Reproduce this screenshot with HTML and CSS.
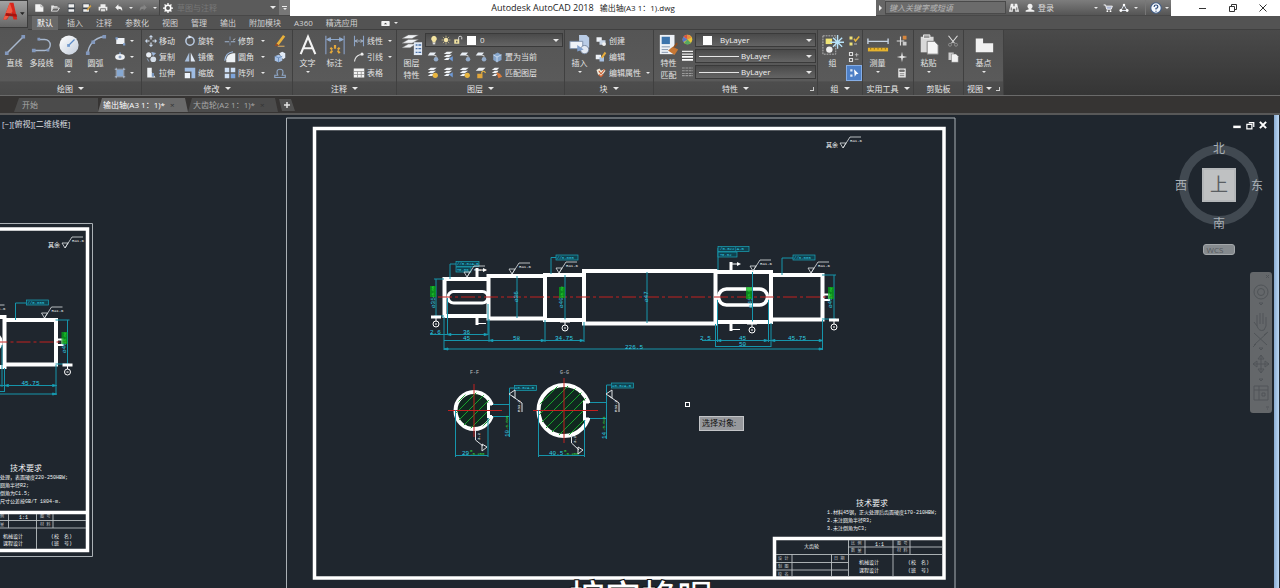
FILE: index.html
```html
<!DOCTYPE html>
<html lang="zh-CN">
<head>
<meta charset="utf-8">
<title>Autodesk AutoCAD 2018 输出轴(A3 1：1).dwg</title>
<link rel="stylesheet" href="styles.css">
</head>
<body>
<svg class="defs" aria-hidden="true">
  <defs>
    <linearGradient id="ball" x1="0" y1="0" x2="1" y2="1"><stop offset="0" stop-color="#fff"/><stop offset="1" stop-color="#c3cddb"/></linearGradient>
    <symbol id="i-new" viewBox="0 0 16 16"><path d="M2 2h9l4 4v8H2z" fill="#f4f4f4"/><path d="M11 2v4h4" fill="none" stroke="#888"/></symbol>
    <symbol id="i-open" viewBox="0 0 16 16"><path d="M2 13V4h4l1 1h5v2H5z" fill="#e8e8e8"/><path d="M5 8h10l-3 5H2z" fill="none" stroke="#eee" stroke-width="1.3"/></symbol>
    <symbol id="i-save" viewBox="0 0 16 16"><path d="M3 1h11v14H3z" fill="#3d444d"/><path d="M4 2h9v5H4zM4 10h9v4H4z" fill="#f0f0f0"/></symbol>
    <symbol id="i-saveas" viewBox="0 0 16 16"><path d="M1 1h11v14H1z" fill="#3d444d"/><path d="M2 2h9v5H2zM2 10h9v4H2z" fill="#f0f0f0"/><path d="M7 11l6-8 2 2-6 7z" fill="#d9a23c"/></symbol>
    <symbol id="i-print" viewBox="0 0 16 16"><path d="M4 2h8v4H4zM1 6h14v6H1z" fill="#eee"/><path d="M4 9h8v5H4z" fill="#ddd" stroke="#555"/></symbol>
    <symbol id="i-undo" viewBox="0 0 16 16"><path d="M2 7l5-5v3c5 0 7 3 6 8-1-3-3-4-6-4v3z" fill="#f2f2f2"/></symbol>
    <symbol id="i-redo" viewBox="0 0 16 16"><path d="M14 7L9 2v3c-5 0-7 3-6 8 1-3 3-4 6-4v3z" fill="#858585"/></symbol>
    <symbol id="i-gear" viewBox="0 0 16 16"><circle cx="8" cy="8" r="4.5" fill="none" stroke="#fff" stroke-width="2.6"/><path d="M8 0v3M8 13v3M0 8h3M13 8h3M2.500 2.500l2 2M11.500 11.500l2 2M13.500 2.500l-2 2M4.500 11.500l-2 2" stroke="#fff" stroke-width="2"/></symbol>
    <symbol id="i-bino" viewBox="0 0 16 16"><path d="M3 1h4v4h2V1h4l3 13h-6V9H6v5H0z" fill="#f0f0f0"/><path d="M3.500 7v5M12.500 7v5" stroke="#555" stroke-width="1.500"/></symbol>
    <symbol id="i-user" viewBox="0 0 16 16"><circle cx="8" cy="5" r="4" fill="#f0f0f0"/><path d="M6 8h4v2l5 2v2H1v-2l5-2z" fill="#f0f0f0"/></symbol>
    <symbol id="i-cart" viewBox="0 0 16 16"><path d="M1 3h3l2 7h7l2-5H5" fill="#aeb8d6" stroke="#f3f3f3" stroke-width="1.500"/><circle cx="7" cy="13" r="1.500" fill="#fff"/><circle cx="12" cy="13" r="1.500" fill="#fff"/></symbol>
    <symbol id="i-share" viewBox="0 0 16 16"><path d="M8 3L3 12h10z" fill="none" stroke="#dfe5f2" stroke-width="1.500"/><circle cx="8" cy="3" r="2" fill="#fff"/><circle cx="3" cy="12" r="2.300" fill="#fff"/><circle cx="13" cy="12" r="2.300" fill="#fff"/></symbol>
    <symbol id="i-rect" viewBox="0 0 16 16"><path d="M3 4h11v8H3z" fill="#eef1f5"/><path d="M2 3h3v3H2zM12 11h3v3h-3z" fill="#7f9fcb"/></symbol>
    <symbol id="i-ell" viewBox="0 0 16 16"><ellipse cx="8" cy="8" rx="6.500" ry="4" fill="#eef1f5"/><path d="M8 6v4M6 8h4" stroke="#4b6c9c"/><path d="M7 2h2v2H7z" fill="#8fb0db"/></symbol>
    <symbol id="i-hatch" viewBox="0 0 16 16"><path d="M4 4h8v8H4z" fill="#86a8d2"/><path d="M3 1v14M13 1v14M1 3h14M1 13h14" stroke="#b8cbe6"/></symbol>
    <symbol id="i-move" viewBox="0 0 16 16"><path d="M8 0l3 3H5zM8 16l3-3H5zM0 8l3-3v6zM16 8l-3-3v6z" fill="#c9d9ee"/><path d="M8 3v10M3 8h10" stroke="#dfe9f6" stroke-width="1.500"/><path d="M6 6h4v4H6z" fill="#555"/></symbol>
    <symbol id="i-rotate" viewBox="0 0 16 16"><circle cx="8" cy="8" r="5.500" fill="none" stroke="#b8c9e0" stroke-width="2"/><path d="M6 0l4 2.500L6 5z" fill="#e6edf7"/></symbol>
    <symbol id="i-trim" viewBox="0 0 16 16"><path d="M1 9h6M9 9h6" stroke="#9fb4d1" stroke-width="1.500"/><path d="M8 2v5M8 10v4" stroke="#71839d" stroke-width="1.500"/><path d="M12 7l3-2" stroke="#ddd"/></symbol>
    <symbol id="i-copy" viewBox="0 0 16 16"><circle cx="5" cy="5" r="3.500" fill="#e8edf4"/><circle cx="11" cy="11" r="3.800" fill="#d5dee9"/><path d="M9 2l5 1-3 3zM3 10l2 4" fill="#9fb8dc" stroke="#9fb8dc"/></symbol>
    <symbol id="i-mirror" viewBox="0 0 16 16"><path d="M7 2v12H1z" fill="#a8bedb"/><path d="M9 2v12h6z" fill="#dfe8f4"/></symbol>
    <symbol id="i-fillet" viewBox="0 0 16 16"><path d="M3 15V11Q4 4 12 3h3v12z" fill="#eef2f6"/><path d="M1 13Q2 2 12 1" fill="none" stroke="#9db9df" stroke-width="1.500"/></symbol>
    <symbol id="i-stretch" viewBox="0 0 16 16"><path d="M3 1h6v6l5 7H3z" fill="#eef2f6"/><path d="M9 8h3v5H9z" fill="#7896bd"/></symbol>
    <symbol id="i-scale" viewBox="0 0 16 16"><path d="M1 1h14v14H10V6H1z" fill="#9ebce3"/><path d="M1 8h7v7H1z" fill="#eef4fb"/></symbol>
    <symbol id="i-array" viewBox="0 0 16 16"><path d="M1 1h6v6H1zM9 1h6v6H9zM1 9h6v6H1z" fill="#cfe0f5"/><path d="M9 9h6v6H9z" fill="#7da4db"/></symbol>
    <symbol id="i-pencil" viewBox="0 0 16 16"><path d="M3 12L12 0l3 2-9 12z" fill="#e9b13b"/><path d="M5 15h9" stroke="#d6a85f" stroke-width="1.500"/><path d="M1 15l2-4 4 3z" fill="#9c4c24"/></symbol>
    <symbol id="i-explode" viewBox="0 0 16 16"><path d="M1 7l5-2 5 2v6l-5 2-5-2z" fill="#a8c2e6"/><path d="M7 3l4-2 4 2v6l-3 2" fill="#e2ebf7"/><path d="M1 7l5 2 5-2M6 9v6" stroke="#5e82b2" fill="none"/></symbol>
    <symbol id="i-offset" viewBox="0 0 16 16"><path d="M1 14h14v-3h-4q3-8-3-8t-3 8H1z" fill="none" stroke="#8da5c5" stroke-width="1.500"/></symbol>
    <symbol id="i-dim" viewBox="0 0 16 16"><path d="M2 1v14M14 1v14" stroke="#8aa4c8" stroke-width="1.500"/><path d="M3 8h10M3 8l3-2M3 8l3 2M13 8l-3-2M13 8l-3 2" stroke="#b9cce6"/></symbol>
    <symbol id="i-leader" viewBox="0 0 16 16"><path d="M2 14Q3 7 9 5h5" fill="none" stroke="#e5e5e5" stroke-width="1.500"/><circle cx="12" cy="4" r="2" fill="#eee"/></symbol>
    <symbol id="i-table" viewBox="0 0 16 16"><path d="M1 2h14v12H1z" fill="#f3f3f3"/><path d="M1 6h14M1 10h14M6 6v8M11 6v8" stroke="#8a8a8a"/></symbol>
    <symbol id="i-layer" viewBox="0 0 16 16"><path d="M4 2h8l-3 4H1z" fill="#e8eef5"/><path d="M9 6h3v3" fill="none" stroke="#ddd"/><circle cx="12" cy="11" r="3" fill="#93abc9"/></symbol>
    <symbol id="i-layer2" viewBox="0 0 16 16"><path d="M5 1h8l-4 3H1zM5 5h7l-4 3H1zM5 9h5l-3 3H1z" fill="#eef2f6"/><path d="M8 10l5-3v7z" fill="#6f9ad6"/></symbol>
    <symbol id="i-layery" viewBox="0 0 16 16"><path d="M5 1h8l-4 3H1zM5 5h7l-4 3H1zM5 9h5l-3 3H1z" fill="#eef2f6"/><circle cx="11" cy="11" r="3.500" fill="#e9b640"/></symbol>
    <symbol id="i-layerr" viewBox="0 0 16 16"><path d="M5 1h6l-3 3H1zM5 5h5l-2 3H1zM5 9h4l-3 3H1z" fill="#eef2f6"/><path d="M7 7l5 2 3 4-5 2z" fill="#db7b3c"/></symbol>
    <symbol id="i-unlock" viewBox="0 0 16 16"><path d="M5 1h9l-4 4H1z" fill="#eef2f6"/><path d="M3 9h7v6H3z" fill="#e2a63a"/><path d="M9 9V7q3-3 5 1" fill="none" stroke="#e9b640" stroke-width="1.500"/></symbol>
    <symbol id="i-cube" viewBox="0 0 16 16"><path d="M3 5l6-3 5 3v7l-6 3-5-3z" fill="#86a6cc"/><path d="M3 5l5 3 6-3M8 8v7" fill="none" stroke="#dce8f6"/></symbol>
    <symbol id="i-bulb" viewBox="0 0 16 16"><path d="M8 1a5 5 0 0 1 2.500 9v2h-5v-2A5 5 0 0 1 8 1z" fill="#f3e3a0"/><path d="M6 12h4v3H6z" fill="#ddd"/></symbol>
    <symbol id="i-sun" viewBox="0 0 16 16"><circle cx="8" cy="8" r="3.500" fill="#f5e5a8"/><path d="M8 1v3M8 12v3M1 8h3M12 8h3M3 3l2 2M11 11l2 2M13 3l-2 2M5 11l-2 2" stroke="#e8d794"/></symbol>
    <symbol id="i-lock" viewBox="0 0 16 16"><path d="M2 7h8v7H2z" fill="#f0e2a2"/><path d="M9 8V4q0-2 2.500-2T14 4v3" fill="none" stroke="#ddd" stroke-width="1.500"/><path d="M5 9h2v3H5z" fill="#555"/></symbol>
    <symbol id="i-blk" viewBox="0 0 16 16"><path d="M2 3h7v6H2z" fill="#edf1f6"/><path d="M6 7h8v6H6z" fill="#c9d6e8"/><circle cx="12" cy="12" r="2.500" fill="#f2f2f2"/></symbol>
    <symbol id="i-blke" viewBox="0 0 16 16"><path d="M1 5h7v6H1z" fill="#edf1f6"/><path d="M6 8h6v6H6z" fill="#a9c1e2"/><path d="M8 8l5-7 2 2-5 7z" fill="#e7ac3c"/></symbol>
    <symbol id="i-attr" viewBox="0 0 16 16"><path d="M2 4l4-2 2 3 4-2 2 2-3 4-3 4-4-3z" fill="#f1eada"/><path d="M5 5l3 4 5-6M5 10l3 3 3-3" fill="none" stroke="#c95b2e" stroke-width="1.500"/></symbol>
    <symbol id="i-wheel" viewBox="0 0 16 16"><circle cx="8" cy="8" r="7" fill="#e6c53c"/><path d="M8 8L2 4A7 7 0 0 1 8 1z" fill="#d4524a"/><path d="M8 8V1a7 7 0 0 1 6 4z" fill="#e98a3c"/><path d="M8 8l-6 4A7 7 0 0 1 2 4z" fill="#5776c9"/><path d="M8 8l5 5A7 7 0 0 1 3 13z" fill="#58a862"/></symbol>
    <symbol id="i-lines" viewBox="0 0 16 16"><path d="M0 2h16M0 6h16" stroke="#eee" stroke-width="1.500"/><path d="M0 10h16M0 14.500h16" stroke="#fff" stroke-width="2.500"/></symbol>
    <symbol id="i-ltype" viewBox="0 0 16 16"><path d="M0 3h16M0 7h16M0 11h16M0 14h16" stroke="#9a9a9a" stroke-width="1.500" stroke-dasharray="4 1"/></symbol>
    <symbol id="i-grpe" viewBox="0 0 16 16"><path d="M2 2h4v4H2zM2 10h4v4H2z" fill="#eee27a"/><path d="M8 5l2 3 5-6" fill="none" stroke="#e7b63d" stroke-width="2"/><path d="M8 12h4" stroke="#ddd"/></symbol>
    <symbol id="i-grp2" viewBox="0 0 16 16"><path d="M2 2h4v4H2zM2 10h4v4H2z" fill="none" stroke="#ddd" stroke-width="1.500"/><path d="M9 5h5M9 11h5M11.500 2.500v5" stroke="#ccc"/></symbol>
    <symbol id="i-grp3" viewBox="0 0 16 16"><path d="M3 3h3v3H3zM3 10h3v3H3z" fill="#dbe8f8"/><path d="M8 3l6 6-3 .5L9 13z" fill="#fff"/></symbol>
    <symbol id="i-idpt" viewBox="0 0 16 16"><path d="M6 2v12M1 8h10" stroke="#ddd" stroke-width="1.500"/><path d="M9 1h5v5H9z" fill="#d7863d"/><path d="M9 9h5v5H9z" fill="#ccc"/></symbol>
    <symbol id="i-pt" viewBox="0 0 16 16"><path d="M8 1l1.200 5.800L15 8l-5.800 1.200L8 15 6.800 9.200 1 8l5.800-1.200z" fill="#e5e5e5"/></symbol>
    <symbol id="i-calc" viewBox="0 0 16 16"><path d="M3 2h10v12H3z" fill="#e8e8e8"/><path d="M5 4h6v2H5zM5 9h6M5 11.500h6" stroke="#666" fill="#777"/></symbol>
    <symbol id="i-cut" viewBox="0 0 16 16"><path d="M2 1l8 10M14 1L6 11" stroke="#ddd" stroke-width="1.500"/><circle cx="4" cy="13" r="2" fill="none" stroke="#999"/><circle cx="12" cy="13" r="2" fill="none" stroke="#999"/></symbol>
    <symbol id="i-cp" viewBox="0 0 16 16"><path d="M2 2h7v10H2z" fill="#ccc"/><path d="M6 4h6l3 3v8H6z" fill="#f2f2f2" stroke="#666" stroke-width=".6"/></symbol>
    <symbol id="b-line" viewBox="0 0 24 24"><path d="M3 21L21 3" stroke="#a9b9cf" stroke-width="1.500"/><path d="M1 19h4v4H1zM19 1h4v4h-4z" fill="#8298bd"/></symbol>
    <symbol id="b-pline" viewBox="0 0 24 24"><path d="M3 18h12a6 6 0 0 0 0-12H8" fill="none" stroke="#a9b9cf" stroke-width="1.500"/><path d="M1 16h4v4H1zM7 4h3v3H7zM17 16h3v3h-3z" fill="#8298bd"/></symbol>
    <symbol id="b-circle" viewBox="0 0 24 24"><circle cx="12" cy="12" r="10.500" fill="url(#ball)"/><path d="M12 12l6-6" stroke="#5c8bc7" stroke-width="1.300"/><path d="M10 11h3v3h-3z" fill="#6f98cc"/></symbol>
    <symbol id="b-arc" viewBox="0 0 24 24"><path d="M3 21C4 12 10 4 21 3" fill="none" stroke="#a9b9cf" stroke-width="1.500"/><path d="M1 19h4v4H1zM19 1h4v4h-4zM7 7h4v4H7z" fill="#8298bd"/></symbol>
    <symbol id="b-A" viewBox="0 0 24 24"><path d="M4 22L12 3l8 19M6.500 15.500h11" fill="none" stroke="#f4f4f4" stroke-width="2.300"/></symbol>
    <symbol id="b-dim" viewBox="0 0 24 24"><path d="M2 2v20M22 2v20" stroke="#8093b2" stroke-width="1.500"/><path d="M3 6h18M3 6l4-2v4zM21 6l-4-2v4z" stroke="#93aed2" fill="#93aed2"/><path d="M12 12v4M7 21l2-3M17 21l-2-3M7 15l2 2M17 15l-2 2" stroke="#e3a83a" stroke-width="2.400"/></symbol>
    <symbol id="b-lay" viewBox="0 0 24 24"><path d="M8 1h11l-7 4H1zM8 6h11l-7 4H1zM8 11h8l-6 4H1z" fill="#f1f3f6" stroke="#777" stroke-width=".5"/><path d="M14 9h9v14h-9z" fill="#dfe8f4"/><path d="M16 12h2M19 12h3M16 16h2M19 16h3M16 20h2M19 20h3" stroke="#4a71a8" stroke-width="1.500"/></symbol>
    <symbol id="b-ins" viewBox="0 0 24 24"><path d="M11 1h8l3 3v11H11z" fill="#b9cce6"/><path d="M1 8h14v8H1z" fill="#eef2f8" stroke="#7a8ca8"/><circle cx="17" cy="17" r="4.500" fill="#e2e9f3" stroke="#75869f"/><path d="M9 12l7 5-7 2z" fill="#7f9ecb"/></symbol>
    <symbol id="b-match" viewBox="0 0 24 24"><path d="M2 1h16v21H2z" fill="#edf1f6"/><path d="M4 3h9v8H4z" fill="#3c74ac"/><path d="M4 14h9M4 17h7M4 20h7" stroke="#7c8fa9"/><path d="M11 18l5-4 6 3-4 6z" fill="#c77734"/><path d="M17 15l4-5" stroke="#8d4e20" stroke-width="2"/></symbol>
    <symbol id="b-grp" viewBox="0 0 24 24"><path d="M1 2h14v20H1z" fill="none" stroke="#bbb" stroke-dasharray="2 1"/><path d="M4 5h7v6H4z" fill="#efe477"/><circle cx="8" cy="17" r="3.500" fill="#f0f0f0"/><path d="M17 1v15M9 9h15M12 4l10 10M22 4L12 14" stroke="#b7e2f8" stroke-width="1.500"/></symbol>
    <symbol id="b-meas" viewBox="0 0 24 24"><path d="M1 5v6M23 5v6M1 8h22" stroke="#c5d2e2" stroke-width="1.500"/><path d="M1 15h22v4H1z" fill="#e6b32e"/><path d="M4 15v2M8 15v2M12 15v2M16 15v2M20 15v2" stroke="#8a6a14"/></symbol>
    <symbol id="b-paste" viewBox="0 0 24 24"><path d="M3 3h14v17H3z" fill="#d9d9d9"/><path d="M6 1h7v4H6z" fill="#999" stroke="#eee"/><path d="M10 8h8l4 4v10H10z" fill="#f5f5f5" stroke="#777"/></symbol>
    <symbol id="b-base" viewBox="0 0 24 24"><path d="M3 5h8v5h11v10H3z" fill="#f1f1f1"/></symbol>
  </defs>
</svg>

<header class="head">
  <button class="app" aria-label="应用程序菜单">
    <svg viewBox="0 0 28 28"><path d="M3 20L10 2h4l4 18h-4l-2-8-5 8z" fill="#d8261c"/><path d="M10 2l3 9-7 9H3z" fill="#f05a44"/><path d="M6 13l11 1 1 3-13-1z" fill="#a5140e"/><path d="M21 12h5l-2.500 3z" fill="#222"/></svg>
  </button>
  <div class="titlebar">
    <div class="qat">
      <button aria-label="新建"><svg><use href="#i-new"/></svg></button>
      <button aria-label="打开"><svg><use href="#i-open"/></svg></button>
      <button aria-label="保存"><svg><use href="#i-save"/></svg></button>
      <button aria-label="另存为"><svg><use href="#i-saveas"/></svg></button>
      <button aria-label="打印"><svg><use href="#i-print"/></svg></button>
      <button aria-label="放弃"><svg><use href="#i-undo"/></svg></button>
      <button class="thin" aria-label="放弃列表"><i class="caret"></i></button>
      <button aria-label="重做"><svg><use href="#i-redo"/></svg></button>
      <button class="thin" aria-label="重做列表"><i class="caret"></i></button>
      <label class="space"><svg><use href="#i-gear"/></svg><select aria-label="工作空间"><option>草图与注释</option></select><i class="caret"></i></label>
      <button class="more" aria-label="自定义"><i class="bar"></i><i class="caret"></i></button>
    </div>
    <h1 class="title"><span>Autodesk AutoCAD 2018</span><span>输出轴(A3 1：1).dwg</span></h1>
    <div class="info">
      <button class="arrow" aria-label="展开搜索"><i class="caret right"></i></button>
      <input type="search" aria-label="搜索" placeholder="键入关键字或短语">
      <button aria-label="查找"><svg><use href="#i-bino"/></svg></button>
      <button class="login"><svg><use href="#i-user"/></svg>登录</button>
      <button class="thin" aria-label="登录菜单"><i class="caret"></i></button>
      <button aria-label="购物车"><svg><use href="#i-cart"/></svg></button>
      <button aria-label="共享"><svg><use href="#i-share"/></svg></button>
      <button class="thin" aria-label="共享菜单"><i class="caret"></i></button>
      <button class="help" aria-label="帮助"><svg viewBox="0 0 16 16"><circle cx="8" cy="8" r="7" fill="#f3f7fc" stroke="#3f5c86" stroke-width="1.500"/><path d="M5.500 6.500q0-2.500 2.500-2.500t2.500 2.200Q10.500 8 8 8.500V10M8 11.500v1.500" fill="none" stroke="#2e4d7c" stroke-width="1.600"/></svg></button>
      <button class="thin" aria-label="帮助菜单"><i class="caret"></i></button>
    </div>
    <div class="win">
      <button aria-label="最小化"><svg viewBox="0 0 12 12"><path d="M3 6.500h7"/></svg></button>
      <button aria-label="还原"><svg viewBox="0 0 12 12"><path d="M2.500 4.500h5v5h-5zM4.500 4V2.500h5v5H8"/></svg></button>
      <button aria-label="关闭"><svg viewBox="0 0 12 12"><path d="M2.500 2.500l7 7M9.500 2.500l-7 7"/></svg></button>
    </div>
  </div>
  <nav class="menu">
    <button class="on">默认</button><button>插入</button><button>注释</button><button>参数化</button><button>视图</button><button>管理</button><button>输出</button><button>附加模块</button><button>A360</button><button>精选应用</button>
    <button class="mini" aria-label="最小化功能区"><svg viewBox="0 0 10 6"><rect width="10" height="6" rx="1" fill="#f3f3f3"/><path d="M3 4h4L5 2z" fill="#444"/></svg><i class="caret"></i></button>
  </nav>
</header>

<main class="ribbon">
  <section class="panel p-draw">
    <div class="tools">
      <button class="big"><svg><use href="#b-line"/></svg>直线</button>
      <button class="big"><svg><use href="#b-pline"/></svg>多段线</button>
      <button class="big"><svg><use href="#b-circle"/></svg>圆<i class="caret"></i></button>
      <button class="big"><svg><use href="#b-arc"/></svg>圆弧<i class="caret"></i></button>
      <div class="col inset">
        <button class="sm" aria-label="矩形"><svg><use href="#i-rect"/></svg><i class="caret"></i></button>
        <button class="sm" aria-label="椭圆"><svg><use href="#i-ell"/></svg><i class="caret"></i></button>
        <button class="sm" aria-label="图案填充"><svg><use href="#i-hatch"/></svg><i class="caret"></i></button>
      </div>
    </div>
    <h2>绘图<i class="caret"></i></h2>
  </section>
  <section class="panel p-mod">
    <div class="tools grid4">
      <button class="sm"><svg><use href="#i-move"/></svg>移动</button>
      <button class="sm"><svg><use href="#i-rotate"/></svg>旋转</button>
      <button class="sm"><svg><use href="#i-trim"/></svg>修剪<i class="caret"></i></button>
      <button class="sm" aria-label="删除"><svg><use href="#i-pencil"/></svg></button>
      <button class="sm"><svg><use href="#i-copy"/></svg>复制</button>
      <button class="sm"><svg><use href="#i-mirror"/></svg>镜像</button>
      <button class="sm"><svg><use href="#i-fillet"/></svg>圆角<i class="caret"></i></button>
      <button class="sm" aria-label="分解"><svg><use href="#i-explode"/></svg></button>
      <button class="sm"><svg><use href="#i-stretch"/></svg>拉伸</button>
      <button class="sm"><svg><use href="#i-scale"/></svg>缩放</button>
      <button class="sm"><svg><use href="#i-array"/></svg>阵列<i class="caret"></i></button>
      <button class="sm" aria-label="偏移"><svg><use href="#i-offset"/></svg></button>
    </div>
    <h2>修改<i class="caret"></i></h2>
  </section>
  <section class="panel p-note">
    <div class="tools">
      <button class="big"><svg><use href="#b-A"/></svg>文字<i class="caret"></i></button>
      <button class="big"><svg><use href="#b-dim"/></svg>标注</button>
      <div class="col inset">
        <button class="sm"><svg><use href="#i-dim"/></svg>线性<i class="caret"></i></button>
        <button class="sm"><svg><use href="#i-leader"/></svg>引线<i class="caret"></i></button>
        <button class="sm"><svg><use href="#i-table"/></svg>表格</button>
      </div>
    </div>
    <h2>注释<i class="caret"></i></h2>
  </section>
  <section class="panel p-layer">
    <div class="tools">
      <button class="big"><svg><use href="#b-lay"/></svg>图层<br>特性</button>
      <div class="col wide">
        <label class="drop"><svg><use href="#i-bulb"/></svg><svg><use href="#i-sun"/></svg><svg><use href="#i-lock"/></svg><b class="chip"></b><select aria-label="图层"><option>0</option></select><i class="caret"></i></label>
        <div class="row">
          <button class="sm" aria-label="关"><svg><use href="#i-layer"/></svg></button><button class="sm" aria-label="隔离"><svg><use href="#i-layer2"/></svg></button><button class="sm" aria-label="冻结"><svg><use href="#i-layer"/></svg></button><button class="sm" aria-label="锁定"><svg><use href="#i-layer"/></svg></button><button class="sm"><svg><use href="#i-cube"/></svg>置为当前</button>
        </div>
        <div class="row">
          <button class="sm" aria-label="打开所有图层"><svg><use href="#i-layery"/></svg></button><button class="sm" aria-label="取消隔离"><svg><use href="#i-layer2"/></svg></button><button class="sm" aria-label="解冻"><svg><use href="#i-layery"/></svg></button><button class="sm" aria-label="解锁"><svg><use href="#i-unlock"/></svg></button><button class="sm"><svg><use href="#i-layerr"/></svg>匹配图层</button>
        </div>
      </div>
    </div>
    <h2>图层<i class="caret"></i></h2>
  </section>
  <section class="panel p-block">
    <div class="tools">
      <button class="big"><svg><use href="#b-ins"/></svg>插入<i class="caret"></i></button>
      <div class="col">
        <button class="sm"><svg><use href="#i-blk"/></svg>创建</button>
        <button class="sm"><svg><use href="#i-blke"/></svg>编辑</button>
        <button class="sm"><svg><use href="#i-attr"/></svg>编辑属性<i class="caret"></i></button>
      </div>
    </div>
    <h2>块<i class="caret"></i></h2>
  </section>
  <section class="panel p-prop">
    <div class="tools">
      <button class="big"><svg><use href="#b-match"/></svg>特性<br>匹配</button>
      <div class="col wide">
        <label class="prop"><svg><use href="#i-wheel"/></svg><span class="drop"><b class="chip"></b><select aria-label="颜色"><option>ByLayer</option></select><i class="caret"></i></span></label>
        <label class="prop"><svg><use href="#i-lines"/></svg><span class="drop"><b class="rule"></b><select aria-label="线宽"><option>ByLayer</option></select><i class="caret"></i></span></label>
        <label class="prop"><svg><use href="#i-ltype"/></svg><span class="drop"><b class="rule"></b><select aria-label="线型"><option>ByLayer</option></select><i class="caret"></i></span></label>
      </div>
    </div>
    <h2>特性<i class="caret"></i><i class="launch"></i></h2>
  </section>
  <section class="panel p-group">
    <div class="tools">
      <button class="big"><svg><use href="#b-grp"/></svg>组</button>
      <div class="col">
        <button class="sm" aria-label="解除编组"><svg><use href="#i-grpe"/></svg></button>
        <button class="sm" aria-label="组编辑"><svg><use href="#i-grp2"/></svg></button>
        <button class="sm active" aria-label="启用组选择"><svg><use href="#i-grp3"/></svg></button>
      </div>
    </div>
    <h2>组<i class="caret"></i></h2>
  </section>
  <section class="panel p-util">
    <div class="tools">
      <button class="big"><svg><use href="#b-meas"/></svg>测量<i class="caret"></i></button>
      <div class="col inset">
        <button class="sm" aria-label="快速选择"><svg><use href="#i-idpt"/></svg></button>
        <button class="sm" aria-label="点坐标"><svg><use href="#i-pt"/></svg></button>
        <button class="sm" aria-label="计算器"><svg><use href="#i-calc"/></svg></button>
      </div>
    </div>
    <h2>实用工具<i class="caret"></i></h2>
  </section>
  <section class="panel p-clip">
    <div class="tools">
      <button class="big"><svg><use href="#b-paste"/></svg>粘贴<i class="caret"></i></button>
      <div class="col inset">
        <button class="sm" aria-label="剪切"><svg><use href="#i-cut"/></svg></button>
        <button class="sm" aria-label="复制剪裁"><svg><use href="#i-cp"/></svg></button>
      </div>
    </div>
    <h2>剪贴板</h2>
  </section>
  <section class="panel p-view">
    <div class="tools">
      <button class="big"><svg><use href="#b-base"/></svg>基点<i class="caret"></i></button>
    </div>
    <h2>视图<i class="caret"></i><i class="launch"></i></h2>
  </section>
</main>

<nav class="files">
  <button class="file start">开始</button>
  <button class="file on">输出轴(A3 1：1)*<i>×</i></button>
  <button class="file">大齿轮(A2 1：1)*<i>×</i></button>
  <button class="plus" aria-label="新图形"><svg viewBox="0 0 18 12"><path d="M1 0h12l4 12H4z" fill="#515151"/><path d="M6 6h6M9 3v6" stroke="#e3e3e3" stroke-width="1.500"/></svg></button>
</nav>

<div class="canvas">
  <svg class="drawing" role="img" aria-label="输出轴零件图">
    <defs>
      <g id="rough"><path d="M0 0L-3-5H3ZL7-11H18" fill="none" stroke="#dfe3e6" stroke-width=".8"/><text x="7" y="-6" class="t4 w">Ra1.6</text></g>
      <g id="datum"><path d="M-5 0H5" stroke="#fff" stroke-width="3"/><path d="M0 0V4" stroke="#fff"/><circle cy="7" r="3" fill="none" stroke="#fff"/><path d="M-1 7H1" stroke="#fff"/></g>
      <g id="cutmark"><path d="M0-4V5" stroke="#fff" stroke-width="3"/><path d="M0-2H8" stroke="#fff"/><path d="M10-2L6-4V0z" fill="#fff"/></g>
      <g id="tri"><path d="M0 0L6-4V4ZM3 2L13 9V18" fill="none" stroke="#dfe3e6"/><text transform="translate(11 18) rotate(-90)" class="t4 w">Ra3.2</text></g>
      <clipPath id="c1"><circle cx="474" cy="410.500" r="18"/></clipPath>
      <clipPath id="c2"><circle cx="564" cy="410.500" r="25"/></clipPath>
      <g id="shaft">
        <g class="thick">
          <path d="M444.500 279H488.500V316H444.500ZM488.500 276H545V318.500H488.500ZM545 275H584V320H545ZM584 271H715.500V323.500H584ZM715.500 272H771V322H715.500ZM771 275H822.500V319.500H771Z"/>
          <rect x="448" y="291.500" width="40" height="11.500" rx="5.700" stroke-width="3"/>
          <rect x="718.500" y="289" width="49" height="16" rx="8" stroke-width="3.500"/>
          <path d="M824 294.500H829V300H824" stroke-width="2"/>
        </g>
        <path d="M438 297H834" class="red" stroke-dasharray="14 3 3 3"/>
        <g class="cyan">
          <path d="M444 317V350M447.500 298V335M488 304V335M489 319V342M545 320V342M584 322V342M715.500 324V347M717.500 300V342M768.500 300V342M771 323V347M822.500 320V350"/>
          <path d="M430 334.500H488M444 340.500H584M702 340.500H823M715 346.500H771M444 349H823"/>
          <path d="M436 279V316M434 279H444M434 316H444M517 276V318M565 275V320M647 272V323M752.500 272V322M834 275V319M822 275H836M822 319H836"/>
          <path d="M450 279V264H456M551 274V257.500H556M718 270V248M782 275V258H793"/>
          <g class="fcf"><rect x="456" y="261.500" width="23" height="5"/><rect x="456" y="267" width="15" height="5"/><rect x="556" y="255" width="22" height="5"/><rect x="718" y="246.500" width="31" height="5"/><rect x="718" y="252" width="19" height="5"/><rect x="793" y="255" width="22" height="5"/></g>
          <path d="M447 334.500l4-1v2zM488 334.500l-4-1v2zM489 340.500l4-1v2zM545 340.500l-4-1v2zM584 340.500l-4-1v2zM717 340.500l4-1v2zM768 340.500l-4-1v2zM444 349l4-1v2zM823 349l-4-1v2zM823 340.500l-4-1v2zM771 340.500l4-1v2z" fill="#1fb9cf"/>
        </g>
        <g class="t4 c">
          <text x="457" y="265">//0.02A-B</text><text x="457" y="271">⌖0.06</text><text x="557" y="259">//0.005</text><text x="720" y="250">/0.022|A-B</text><text x="720" y="256">⌖0.02</text><text x="794" y="259">//0.005</text>
        </g>
        <g class="t6 c">
          <text x="430" y="334">2.6</text><text x="463" y="334">36</text><text x="463" y="340">45</text><text x="513" y="340">58</text><text x="555" y="340">34.75</text><text x="625" y="349">226.5</text><text x="700" y="340">2.5</text><text x="739" y="340">45</text><text x="739" y="346">50</text><text x="788" y="340">45.75</text>
          <text transform="translate(435 308) rotate(-90)">ø35</text><text transform="translate(518 302) rotate(-90)">ø36</text><text transform="translate(563 308) rotate(-90)">ø40</text><text transform="translate(648 302) rotate(-90)">ø47</text><text transform="translate(752 308) rotate(-90)">ø45</text><text transform="translate(832 308) rotate(-90)">ø40</text>
        </g>
        <g fill="#05a718" opacity=".75"><path d="M430 286h6v11h-6zM559 287h6v11h-6zM746 287h6v12h-6zM828 287h6v12h-6z"/></g>
        <g class="t4 g"><text transform="translate(434 298) rotate(-90)">+0.05</text><text transform="translate(563 298) rotate(-90)">+0.02</text><text transform="translate(750 299) rotate(-90)">+0.02</text><text transform="translate(832 299) rotate(-90)">+0.02</text></g>
        <use href="#rough" x="467" y="277"/><use href="#rough" x="512" y="274"/><use href="#rough" x="559" y="273"/><use href="#rough" x="753" y="271"/><use href="#rough" x="811" y="273"/>
        <use href="#datum" x="436" y="317"/><use href="#datum" x="565" y="321"/><use href="#datum" x="752" y="323"/><use href="#datum" x="834" y="320"/>
        <use href="#cutmark" x="477" y="272"/><use href="#cutmark" x="731" y="266"/>
        <path d="M477 317V325M731 323V331" stroke="#fff" stroke-width="3"/><path d="M477 323.500H486M731 329.500H740" stroke="#fff"/>
      </g>
    </defs>
    <g transform="translate(0 -115)">
      <path d="M286.500 600V118H955V600" fill="none" stroke="#aab0b5"/>
      <rect x="314.500" y="128.500" width="629.500" height="449.500" fill="none" stroke="#fff" stroke-width="3.500"/>
      <text x="826" y="147" class="t6 w">其余</text><use href="#rough" x="843" y="148"/>
      <use href="#shaft"/>

      <g>
        <circle cx="474" cy="410.500" r="18.500" fill="#10281f" stroke="#fff" stroke-width="4"/>
        <g clip-path="url(#c1)" class="green"><path d="M446 414l30-30M446 423l38-38M448 431l44-44M456 433l42-42M465 434l34-34M475 434l26-26"/></g>
        <path d="M489 405h8v11h-8z" fill="#1f262e"/><path d="M492 404H488.500V416.500H492" fill="none" stroke="#fff" stroke-width="3"/>
        <path d="M448 410.500H502M474 384V437" class="red"/>
        <circle cx="564" cy="410.500" r="25.500" fill="#10281f" stroke="#fff" stroke-width="4"/>
        <g clip-path="url(#c2)" class="green"><path d="M530 414l40-40M530 424l50-50M534 430l50-50M541 433l50-50M548 436l46-46M554 440l40-40M562 442l30-30"/></g>
        <path d="M585 403h9v15h-9z" fill="#1f262e"/><path d="M589 402H584.500V419H589" fill="none" stroke="#fff" stroke-width="3"/>
        <path d="M533 410.500H598M564 378V443" class="red"/>
      </g>
      <g class="cyan">
        <path d="M493 404.500H510M493 416.500H510M509.500 437V388H514M455.500 410V457M488 418V457M455 455.500H488"/>
        <path d="M590 402.500H606M590 418.500H606M606.500 439V385H611M538.500 410V457M584.500 420V457M538 455.500H585"/>
        <g class="fcf"><rect x="514.500" y="385.500" width="22" height="5"/><rect x="611.500" y="383" width="22" height="5"/></g>
      </g>
      <g class="t4 c"><text x="515" y="389">=0.02A-B</text><text x="612" y="387">=0.02A-B</text></g>
      <g class="t6 c"><text x="462" y="455">29</text><text x="549" y="455">40.5</text><text transform="translate(509 437) rotate(-90)">10</text><text transform="translate(606 439) rotate(-90)">14</text></g>
      <g class="t4 g"><text x="470" y="452">0</text><text x="470" y="455">-0.200</text><text x="564" y="452">0</text><text x="564" y="455">-0.200</text><text transform="translate(508 430) rotate(-90)">-0.036</text><text transform="translate(605 431) rotate(-90)">-0.043</text></g>
      <use href="#tri" x="509" y="394"/><use href="#tri" x="606" y="394"/>
      <g fill="none" stroke="#dfe3e6"><path d="M475.500 431V440L483 446M482 444V451L487 447ZM571.500 435V443L579 450M578 447V454L583 450Z"/></g>
      <g class="t4 w"><text transform="translate(480 440) rotate(-90)">3.2</text><text transform="translate(576 443) rotate(-90)">3.2</text></g>
      <g class="t5 w dim"><text x="470" y="374">F-F</text><text x="560" y="374">G-G</text></g>
      <rect x="685.500" y="402.500" width="4" height="4" fill="none" stroke="#fff"/>

      <text x="856" y="506" class="t8 w">技术要求</text>
      <g class="t5 w"><text x="827" y="514">1.材料45钢，正火处理后齿面硬度170-210HBW;</text><text x="827" y="522">2.未注圆角半径R3;</text><text x="827" y="530">3.未注倒角为C3;</text></g>
      <path d="M774.500 578V538.500H943" fill="none" stroke="#fff" stroke-width="3.500"/>
      <g fill="none" stroke="#b9bec2" stroke-width=".9"><path d="M848.500 540V577M893 540V577M865 540V554M910 540V554M848 547H943M776 554.500H943M776 562.500H848M776 570H848M792 554V577M831.500 554V577"/></g>
      <g class="t5 w"><text x="804" y="548">大齿轮</text><text x="875" y="546">1:1</text><text x="859" y="564">机械设计</text><text x="859" y="572">课程设计</text><text x="908" y="564">(校　名)</text><text x="908" y="572">(班　号)</text></g>
      <g class="t4 w dim"><text x="778" y="560">设 计</text><text x="778" y="568">制 图</text><text x="778" y="576">校 名</text><text x="834" y="560">日 期</text><text x="851" y="545">比 例</text><text x="851" y="552">数 量</text><text x="897" y="545">图 号</text><text x="897" y="552">材 料</text></g>

      <use href="#shaft" x="-766.500" y="45"/>
      <path d="M0 223.500H92.500V556.500H0" fill="none" stroke="#aab0b5"/>
      <path d="M0 229H87.500V550.500H0M0 512.500H87" fill="none" stroke="#fff" stroke-width="3.500"/>
      <text x="48" y="247" class="t6 w">其余</text><use href="#rough" x="65" y="248"/>
      <text x="10" y="471" class="t8 w">技术要求</text>
      <g class="t5 w"><text x="0" y="479">处理，表面硬度220-250HBW;</text><text x="0" y="487">圆角半径R2;</text><text x="0" y="495">倒角为C1.5;</text><text x="0" y="503">尺寸公差按GB/T 1804-m.</text><text x="19" y="519">1:1</text><text x="3" y="538">机械设计</text><text x="3" y="545">课程设计</text><text x="51" y="538">(校　名)</text><text x="51" y="545">(班　号)</text></g>
      <path d="M0 520.500H86M0 528H86M8.500 514V528M36.500 514V549M53 514V528" fill="none" stroke="#b9bec2" stroke-width=".9"/>
      <g class="t4 w dim"><text x="0" y="518">例</text><text x="0" y="526">量</text><text x="40" y="518">图 号</text><text x="40" y="526">材 料</text></g>
    </g>
  </svg>

  <p class="viewlabel">[−][俯视][二维线框]</p>
  <div class="docwin">
    <button aria-label="最小化图形"><svg viewBox="0 0 8 8"><path d="M1 5.500h6" stroke-width="2"/></svg></button>
    <button aria-label="还原图形"><svg viewBox="0 0 8 8"><path d="M1.500 3.500h4v3.500h-4zM3 2h4v3.500"/></svg></button>
    <button aria-label="关闭图形"><svg viewBox="0 0 8 8"><path d="M1.500 1.500l5 5M6.500 1.500l-5 5" stroke-width="1.600"/></svg></button>
  </div>
  <svg class="cube" viewBox="0 0 92 96" role="img" aria-label="视图方位">
    <circle cx="46" cy="49" r="35.500" fill="none" stroke="#414951" stroke-width="9"/>
    <rect x="29" y="32" width="34" height="34" fill="#b4b7b9"/><rect x="31" y="34" width="30" height="30" fill="#bfc1c2"/>
    <text x="46" y="55" class="top">上</text>
    <g class="dir"><text x="46" y="17">北</text><text x="46" y="92">南</text><text x="8" y="54">西</text><text x="84" y="54">东</text></g>
  </svg>
  <button class="wcs">WCS</button>
  <div class="navbar">
    <svg viewBox="0 0 22 141" fill="none" stroke="#505458"><path d="M16 3l3 3M19 3l-3 3"/><circle cx="11" cy="20" r="7"/><circle cx="11" cy="20" r="3.500"/><path d="M9 31h4l-2 2zM9 76h4l-2 2zM9 107h4l-2 2z"/><path d="M7 54V43M10 52V41M13 52V41M16 54V45M7 54q2 6 7 4l2-4M4 50l3 4"/><path d="M4 61l13 12M17 61L4 73M14 63l4-3M3 75l3-3"/><path d="M11 83v18M3 92h16M11 83l-3 4h6zM11 101l-3-4h6zM3 92l4-3v6zM19 92l-4-3v6z"/><path d="M4 114h14v14H4zM4 118h14M9 114v14M12 121h3v3h-3z"/><path d="M16 135h3M17 137h1"/></svg>
  </div>
  <div class="tip">选择对象:</div>
  <div class="edge"></div>
  <p class="caption">按空格呢</p>
</div>
</body>
</html>
```
FILE: styles.css
```css
* { box-sizing: border-box; }
html, body { height: 100%; }
body {
  margin: 0;
  display: flex;
  flex-direction: column;
  overflow: hidden;
  background: #1f262e;
  color: #e4e4e4;
  font: 8px/12px "Open Sans", "Noto Sans CJK SC", sans-serif;
}
button, input, select { font: inherit; color: inherit; margin: 0; padding: 0; border: 0; background: none; }
button { display: inline-flex; align-items: center; justify-content: center; white-space: nowrap; }
select { appearance: none; outline: 0; flex: 1; min-width: 0; }
h1, h2, p { margin: 0; font-weight: normal; font-size: inherit; }
svg { display: block; flex: none; }
.defs { position: absolute; width: 0; height: 0; }

.caret { flex: none; width: 0; height: 0; border: 2px solid transparent; border-top-color: #e8e8e8; border-bottom: 0; }
.caret.right { border: 3px solid transparent; border-left-color: #eee; border-right: 0; }

/* title bar */
.head { display: grid; grid-template-columns: 28px 1fr; grid-template-rows: 16px 14px; background: #535353; flex: none; }
.app { grid-row: 1 / 3; align-self: start; height: 28px; background: linear-gradient(#a3a3a3, #666); border: 1px solid #3c3c3c; border-left: 0; }
.app svg { width: 27px; height: 26px; }
.titlebar { display: flex; background: #fff; min-width: 0; }
.qat, .info { display: flex; align-items: center; background: linear-gradient(#7d7d7d, #555); border-bottom: 1px solid #484848; }
.qat { padding-left: 3px; }
.qat button, .info button { width: 16px; height: 15px; }
.qat svg, .info svg { width: 10px; height: 10px; }
.qat .thin, .info .thin { width: 8px; }
.space { display: flex; align-items: center; width: 120px; height: 15px; padding: 0 3px; gap: 4px; background: #5b5b5b; border-left: 1px solid #444; color: #777; }
.space .caret { border-width: 3px 3px 0; }
.qat .more { width: 11px; flex-direction: column; gap: 1px; background: #777; }
.bar { width: 5px; height: 1px; background: #eee; }
.title { flex: 1; display: flex; justify-content: center; gap: 6px; line-height: 16px; color: #222; font-size: 9px; }
.title span + span { font-size: 8px; }
.info .arrow { width: 9px; background: #666; }
.info input { width: 121px; height: 13px; padding: 0 3px; background: #6b6b6b; border: 1px solid #4a4a4a; font-style: italic; }
.info input::placeholder { color: #b5b5b5; opacity: 1; }
.info .login { width: 70px; justify-content: flex-start; gap: 3px; padding-left: 3px; color: #ddd; }
.info .help { width: 18px; border-left: 1px solid #777; margin-left: 5px; padding-left: 3px; }
.info .help svg { width: 12px; height: 12px; }
.win { display: flex; width: 109px; justify-content: space-between; padding: 0 11px 0 25px; }
.win svg { width: 12px; height: 12px; fill: none; stroke: #333; stroke-width: 1; }

/* ribbon tabs */
.menu { display: flex; gap: 5px; padding-left: 4px; border-bottom: 1px solid #3f3f3f; color: #d2d2d2; }
.menu button { padding: 0 4px; height: 14px; }
.menu .on { padding: 0 5px; background: #696969; color: #fff; }
.menu .mini { gap: 4px; margin-left: 10px; }
.menu .mini svg { width: 9px; height: 5px; }

/* ribbon panels */
.ribbon { display: flex; flex: none; height: 66px; background: linear-gradient(#4a4a4a, #353535); border-bottom: 1px solid #6a6a6a; }
.panel { display: flex; flex-direction: column; flex: none; background: linear-gradient(#555, #5a5a5a 78%, #4d4d4d 80%, #4a4a4a); border-right: 1px solid #404040; }
.panel h2 { display: flex; align-items: center; justify-content: center; gap: 5px; height: 13px; color: #e8e8e8; position: relative; }
.panel h2 .caret { border-width: 3px 3px 0; }
.launch { position: absolute; right: 3px; bottom: 4px; width: 4px; height: 4px; border: 1px solid #ccc; border-top: 0; border-left: 0; }
.tools { display: flex; flex: 1; padding: 3px 1px 0; }
.big { width: 27px; height: 48px; flex-direction: column; justify-content: flex-start; flex: none; }
.big svg { width: 22px; height: 24px; }
.big .caret { margin-top: 2px; }
.col { display: flex; flex-direction: column; flex: none; }
.col.inset { padding-left: 3px; }
.col.wide { flex: 1; }
.row { display: flex; }
.sm { height: 16px; min-width: 16px; justify-content: flex-start; gap: 2px; padding-left: 2px; }
.sm svg { width: 12px; height: 12px; }
.sm .caret { margin-left: 3px; }
.p-draw .sm .caret { margin-left: 2px; }
.p-mod .sm .caret { margin-left: 5px; }
.sm.active { background: #4d7fc6; outline: 1px solid #86aee6; outline-offset: -1px; }
.grid4 { display: grid; grid-template-columns: 39px 40px 50px 18px; grid-auto-rows: 16px; }
.p-draw { width: 142px; }
.p-mod { width: 151px; }
.p-note { width: 104px; }
.p-layer { width: 168px; }
.p-block { width: 89px; }
.p-prop { width: 164px; }
.p-group { width: 45px; }
.p-util { width: 51px; }
.p-clip { width: 50px; }
.p-view { width: 40px; }
.p-view .tools { justify-content: center; }
.panel.p-view h2 { padding-right: 8px; gap: 3px; }
.drop { display: flex; align-items: center; gap: 2px; height: 14px; margin-bottom: 2px; padding: 0 3px; flex: 1; background: linear-gradient(#4a4a4a, #646464); border: 1px solid #3a3a3a; }
.p-layer .drop { flex: none; }
.drop svg { width: 10px; height: 10px; }
.chip { width: 9px; height: 9px; background: #fff; margin: 0 2px; flex: none; }
.prop .chip { margin: 0 6px 0 4px; }
.drop .caret { border-width: 3px 3px 0; }
.prop { display: flex; height: 16px; gap: 2px; color: #f2f2f2; }
.prop > svg { width: 11px; height: 11px; margin-top: 1px; }
.rule { height: 1px; width: 40px; background: #e5e5e5; }

/* drawing tabs */
.files { display: flex; flex: none; height: 19px; padding: 2px 0 0 14px; background: #363433; border-bottom: 2px solid #585858; }
.file { height: 14px; width: 90px; justify-content: flex-start; padding-left: 5px; background: #4b4b4b; color: #a9a9a9; clip-path: polygon(4px 0, 87px 0, 100% 100%, 0 100%); }
.file.start { width: 84px; padding-left: 8px; clip-path: polygon(5px 0, 100% 0, 100% 100%, 0 100%); }
.file.on { background: #6a6a6a; color: #fff; }
.file i { margin-left: 5px; font-style: normal; color: #333; }
.plus { width: 18px; height: 14px; }
.plus svg { width: 18px; height: 12px; }

/* drawing area */
.canvas { position: relative; flex: 1; min-height: 0; overflow: hidden; background: #1f262e; }
.drawing { width: 100%; height: 100%; font-family: "Liberation Mono", "Noto Sans CJK SC", monospace; }
.thick { fill: none; stroke: #fff; stroke-width: 4; }
.red { fill: none; stroke: #c3201f; }
.green path { stroke: #18a32c; stroke-width: 1; }
.cyan { fill: none; stroke: #1695ab; stroke-width: 1; }
.cyan .fcf { fill: #0f4250; stroke: #1aa5ba; stroke-width: .7; }
.t4 { font-size: 4px; }
.t5 { font-size: 5px; }
.t6 { font-size: 6px; }
.t8 { font-size: 8px; }
.c { fill: #2fd0e6; }
.g { fill: #2ee63c; }
.w { fill: #f2f4f5; }
.dim { opacity: .75; }
.viewlabel { position: absolute; left: 2px; top: 3px; color: #dcdfe2; }
.docwin { position: absolute; right: 12px; top: 5px; display: flex; gap: 3px; }
.docwin svg { width: 10px; height: 10px; fill: none; stroke: #fff; }
.cube { position: absolute; right: 15px; top: 21px; width: 92px; height: 96px; }
.cube text { text-anchor: middle; fill: #a9b0b6; font-size: 12px; }
.cube .top { fill: #5a5e62; font-size: 18px; }
.wcs { position: absolute; right: 45px; top: 129px; width: 32px; height: 11px; padding-right: 8px; border-radius: 3px; background: #858a8e; border: 1px solid #a3a7aa; color: #55595d; }
.navbar { position: absolute; right: 8px; top: 157px; width: 22px; height: 141px; border-radius: 3px; background: #64676a; }
.tip { position: absolute; left: 699px; top: 301px; padding: 0 7px 1px 2px; height: 15px; border: 1px solid #c3c5c8; background: #96989c; color: #111; line-height: 12px; }
.edge { position: absolute; right: 1px; top: 0; bottom: 0; width: 5px; background: linear-gradient(90deg, #89acd3, #bcd8f4); }
.caption { position: absolute; left: 569px; top: 463px; font-size: 36px; line-height: 40px; font-weight: bold; color: #fff; -webkit-text-stroke: 1px #111; }
```
